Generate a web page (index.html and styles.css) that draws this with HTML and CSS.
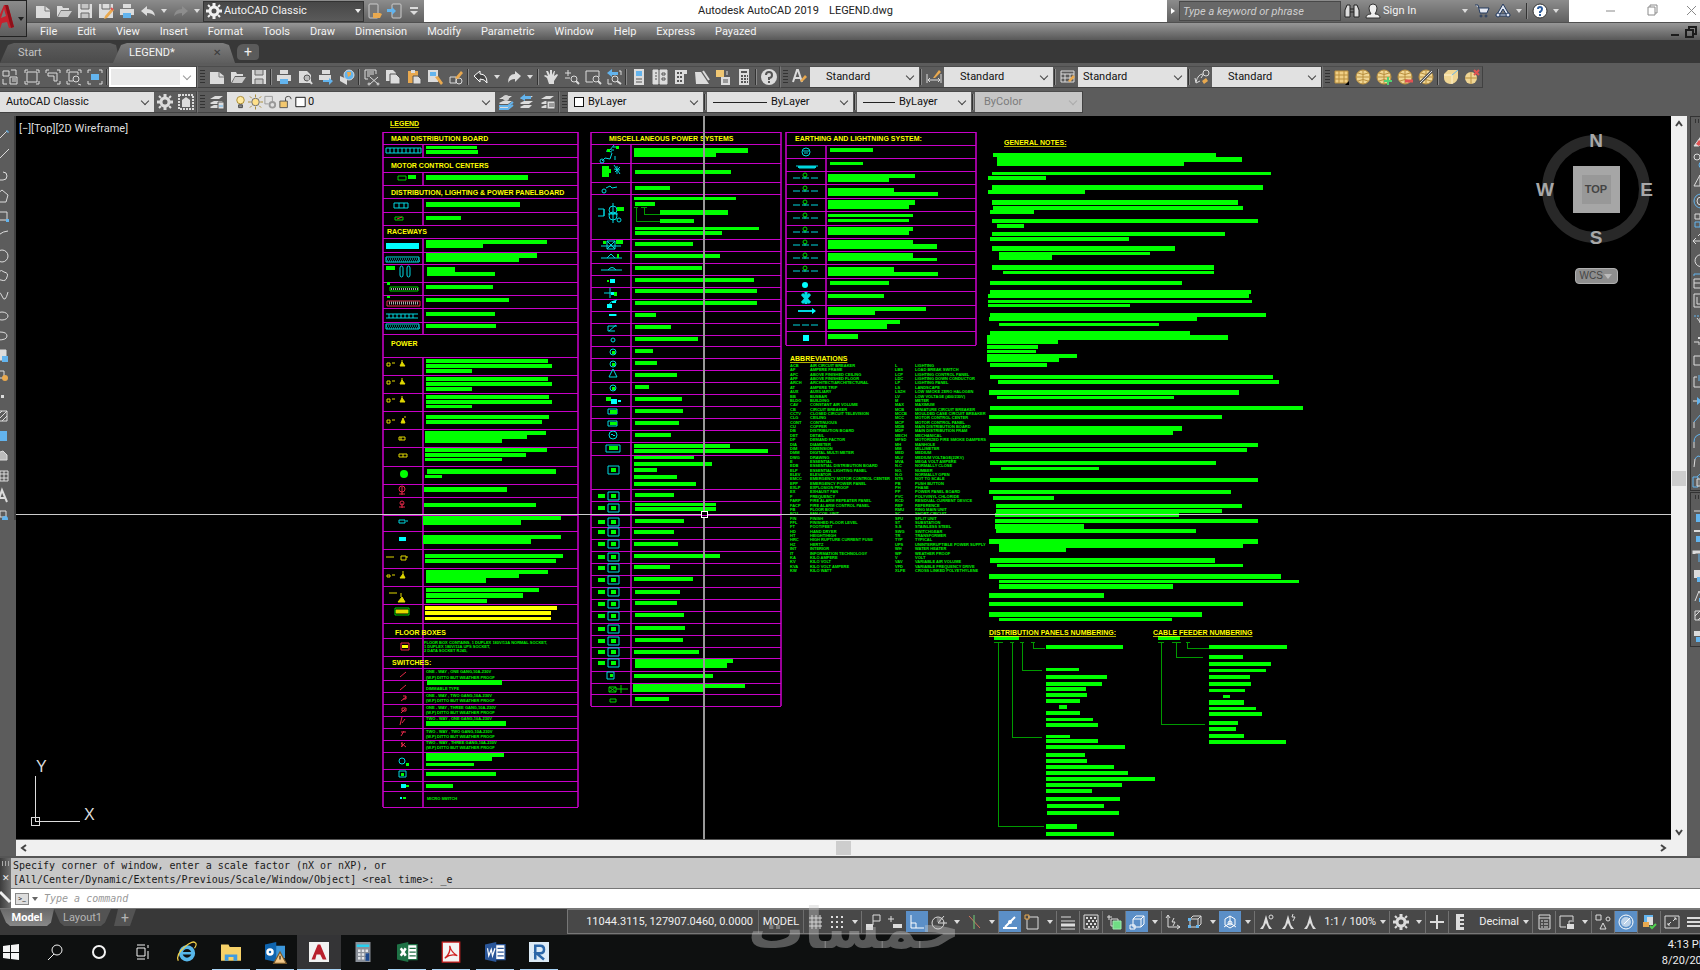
FILE: index.html
```
<!DOCTYPE html>
<html lang="en">

<head>
    <meta charset="UTF-8">
    <meta name="viewport" content="width=device-width, initial-scale=1.0">
    <title>Autodesk AutoCAD 2019 - LEGEND.dwg</title>
    <link rel="stylesheet" href="styles.css">
</head>

<body>
    <header class="top">
        <button class="app-button" aria-label="Application menu">
            <svg viewBox="0 0 26 36"><path d="M-6 27L4 4h4l6 22-5 1-2-6-5 1-2 6z" fill="#c8202c"/><path d="M1 17l5-2-2-7z" fill="#777"/><path d="M8 4l6 22-3 1L5 4z" fill="#8d1019"/><path d="M18 16h6l-3 4z" fill="#222"/></svg>
        </button>
        <div class="top-rows">
            <div class="titlebar">
                <div class="quick-access">
                    <span class="tools" data-icons="new open save saveas print undo . redo ."></span>
                    <label class="workspace"><span data-icon="gear"></span>
                        <select aria-label="Workspace"><option>AutoCAD Classic</option></select>
                    </label>
                    <span class="tools phones" data-icons="phoneopen phonesave more"></span>
                </div>
                <h1 class="title"><span>Autodesk AutoCAD 2019</span><span>LEGEND.dwg</span></h1>
                <div class="info-center">
                    <button class="arrow-box" aria-label="Collapse search"><i></i></button>
                    <input type="text" placeholder="Type a keyword or phrase" aria-label="Search">
                    <span class="tools" data-icons="binoculars user"></span>
                    <button class="sign-in">Sign In</button>
                    <span class="tools" data-icons=". cart a360 . | help2 ."></span>
                </div>
                <div class="window-buttons">
                    <button aria-label="Minimize" data-icon="min"></button>
                    <button aria-label="Restore" data-icon="restore"></button>
                    <button aria-label="Close" data-icon="close"></button>
                </div>
            </div>
            <nav class="menubar">
                <a href="#">File</a>
                <a href="#">Edit</a>
                <a href="#">View</a>
                <a href="#">Insert</a>
                <a href="#">Format</a>
                <a href="#">Tools</a>
                <a href="#">Draw</a>
                <a href="#">Dimension</a>
                <a href="#">Modify</a>
                <a href="#">Parametric</a>
                <a href="#">Window</a>
                <a href="#">Help</a>
                <a href="#">Express</a>
                <a href="#">Payazed</a>
                <span class="doc-buttons">
                    <button aria-label="Minimize drawing" data-icon="docmin"></button>
                    <button aria-label="Restore drawing" data-icon="docrestore"></button>
                </span>
            </nav>
        </div>
    </header>

    <div class="file-tabs">
        <button class="file-tab">Start</button>
        <button class="file-tab active">LEGEND*<span class="tab-close">✕</span></button>
        <button class="tab-add" aria-label="New tab">+</button>
    </div>

    <div class="toolbars">
        <div class="toolbar-row">
            <div class="toolbar first">
                <span class="tools" data-icons="vp1 vp2 vp3 vp4 vp5 |"></span>
                <label class="combo blank"><select aria-label="Viewport scale"><option></option></select></label>
            </div>
            <div class="toolbar">
                <i class="grip"></i>
                <span class="tools" data-icons="new open save | print preview publish globe | cut copy paste match blockedit | undo2 . redo2 . | hand zoomrt zoomwin zoomprev | props dcenter palettes sheets markup calc | help"></span>
            </div>
            <div class="toolbar">
                <i class="grip"></i>
                <span class="tools" data-icons="textstyle"></span>
                <label class="combo style"><select aria-label="Text style"><option>Standard</option></select></label>
                <span class="tools" data-icons="| dimstyle"></span>
                <label class="combo style"><select aria-label="Dimension style"><option>Standard</option></select></label>
                <span class="tools" data-icons="| tablestyle"></span>
                <label class="combo style tight"><select aria-label="Table style"><option>Standard</option></select></label>
                <span class="tools" data-icons="| leaderstyle"></span>
                <label class="combo style"><select aria-label="Leader style"><option>Standard</option></select></label>
            </div>
            <div class="toolbar">
                <i class="grip"></i>
                <span class="tools" data-icons="mesh1 mesh2 mesh3 mesh4 mesh5 | mesh6 mesh7"></span>
            </div>
        </div>
        <div class="toolbar-row">
            <div class="toolbar first">
                <label class="combo space"><select aria-label="Workspaces"><option>AutoCAD Classic</option></select></label>
                <span class="tools" data-icons="gear lattice"></span>
            </div>
            <div class="toolbar">
                <i class="grip"></i>
                <span class="tools" data-icons="layers"></span>
                <label class="combo layer"><span class="layer-state" data-icons="bulb sun freeze lock swatch"></span><select aria-label="Layer"><option>0</option></select></label>
                <span class="tools" data-icons="laycur layprev laystate"></span>
            </div>
            <div class="toolbar">
                <i class="grip"></i>
                <label class="combo color"><i class="swatch"></i><select aria-label="Color"><option>ByLayer</option></select></label>
                <span class="tools" data-icons="|"></span>
                <label class="combo linetype"><i class="line long"></i><select aria-label="Linetype"><option>ByLayer</option></select></label>
                <span class="tools" data-icons="|"></span>
                <label class="combo weight"><i class="line"></i><select aria-label="Lineweight"><option>ByLayer</option></select></label>
                <span class="tools" data-icons="|"></span>
                <label class="combo plot"><select aria-label="Plot style" disabled><option>ByColor</option></select></label>
            </div>
        </div>
    </div>

    <main class="workspace-area">
        <div class="side-tools left" data-icons="line xline pline polygon rect arc circle cloud spline ellipse elarc insert block point hatch gradient region table mtext addsel"></div>
        <section class="viewport">
            <div class="canvas">
                <svg class="drawing" role="img" aria-label="Electrical legend drawing">
                    <g id="sheet" transform="translate(-16 -116)">
                        <g id="grid"></g>
                        <g id="bars"></g>
                        <g id="captions"></g>
                        <g id="abbreviations" class="small"></g>

                        <!-- leaders of the numbering diagrams -->
                        <path class="leader" d="M994 642h9M998 642v184h46M1010 642h4M1012 642v95h30M1020 642h4M1022 642v28h20M1031 642h4M1033 642v6h12M1158 642h6M1161 642v82h44M1172 642h9M1176 642v15h27M1186 642h4M1187 642v6h22"/>
                        <path class="leader" d="M634 207h4M636 207v14h24M641 207h6M644 207v7h16"/>

                        <!-- main distribution board, raceways -->
                        <g class="cyan">
                            <path d="M386 148h35v5h-35zM390 148v5M394 148v5M398 148v5M402 148v5M406 148v5M410 148v5M414 148v5M418 148v5M394 203h14v5h-14zM399 203v5M404 203v5"/>
                            <path class="solid" d="M386 243h33v6h-33z"/>
                            <path d="M386 257h33v5h-33zM386 324h33v5h-33z"/>
                            <path class="dots" d="M386 259h33M387 261h33M386 326h33M387 328h33"/>
                            <rect x="400" y="266" width="3" height="11" rx="2"/><rect x="407" y="266" width="3" height="11" rx="2"/>
                            <path d="M386 314h32M386 318h32M389 314v4M393 314v4M397 314v4M401 314v4M405 314v4M409 314v4M413 314v4"/>
                        </g>
                        <path class="green" d="M390 287h28v4h-28z"/>
                        <path class="grey dots" d="M391 289h27" stroke-width="2"/>
                        <path class="green" d="M398 176h8v4h-8zM395 217h8v3h-8z"/>
                        <path class="green solid" d="M408 175h8v4h-8zM386 266h9v4h-9zM387 282h3v3h-3zM387 296h3v2h-3z"/>
                        <path class="red" d="M387 301h33v5h-33zM397 219l5-2"/><path class="grey dots" d="M389 303h29" stroke-width="3"/>

                        <!-- power outlets -->
                        <g class="yellow">
                            <path d="M387 363h3v3h-3zM392 363h3M402 360v3M387 381h3v3h-3zM392 381h3M402 378v3M387 399h3v3h-3zM392 399h3M402 396v3M387 420h3v3h-3zM392 420h3M405 416v2M399 437h6v3h-6zM401 437v3M399 454h8v3h-8zM403 454v3M386 557h8M401 556h5v4h-5zM406 557h2M387 575h3v2h-3zM392 575h3M403 571v3M389 593h8M401 593v4"/>
                            <path class="fill" d="M400 366l2-4 3 4zM400 384l2-4 3 4zM400 402l2-4 3 4zM401 423l2-5 2 5zM400 578l3-4 2 4zM398 602l4-5 3 5zM396 610h12v3h-12z"/>
                        </g>
                        <circle class="green solid" cx="404" cy="474" r="4"/>
                        <path class="green" d="M395 608h14v7h-14z"/>
                        <g class="red"><circle cx="402" cy="489" r="3"/><path d="M402 487v8M399 494h6"/><circle cx="402" cy="503" r="2"/><path d="M402 503v5M399 507h6M401 643h8v7h-8zM400 677l6-5M400 690l6-5M401 701l5-4M403 696h3v3h-3M401 713l4-4M402 708h4v3h-4zM400 725l2-8M402 723l3-4M401 736l3-5M401 732h5M401 747l4-4M401 743l5 4M402 742v5"/></g>
                        <path class="yellow solid" d="M402 645h6v3h-6z"/>
                        <g class="cyan"><path d="M399 520h6v3h-6zM406 521h2"/><path class="solid" d="M399 537h7v4h-7z"/><circle cx="402" cy="761" r="3"/><path d="M399 771h7v6h-7z"/><path class="solid" d="M401 784h5v4h-5zM400 797h2v2h-2z"/></g>
                        <path class="green solid" d="M406 763h3v3h-3zM401 773h3v3h-3zM406 785h3v2h-3zM403 797h3v2h-3z"/>

                        <!-- miscellaneous power systems -->
                        <g class="cyan">
                            <path d="M602 161l3-3 5 1M606 151l6 1M614 145l-4 5M613 147l4 0M612 153l-2 6M615 156v4M611 150h3M614 165l6 9M615 172l5-5M614 169l6 1M617 166v8"/>
                            <circle cx="602" cy="161" r="2"/><circle cx="613" cy="210" r="4"/><circle cx="613" cy="216" r="4"/><circle cx="604" cy="191" r="2"/><circle cx="619" cy="220" r="2"/>
                            <path d="M606 188l4-2 2 2 5-1M613 203v20M598 209h6v7M598 216h6M604 209v7M608 214h10M601 246h20M607 241h8v8h-8zM607 241l8 8M615 241l-8 8M601 258h21M607 258l4-4 4 4M601 270h21M608 270q4-5 8 0M604 293h9M610 288v10M608 306l3-4 6-2M609 315h8M608 326h9M609 331l7-6M608 326v5h7M609 377l4-8 4 8z"/>
                            <path class="solid" d="M610 279h5v4h-5zM611 292h4v3h-4zM607 304h5v4h-5zM612 301h4v2h-4zM609 314h7v2h-7zM611 399h6v5h-6zM618 400h3v2h-3z"/>
                            <circle cx="613" cy="340" r="2"/><circle cx="613" cy="352" r="3"/><circle cx="613" cy="364" r="3"/><circle cx="613" cy="388" r="3"/><circle cx="613" cy="435" r="4"/>
                            <path d="M611 435q1-2 2 0t2 0M608 409h9v5h-9zM608 421h9v5h-9zM606 445h14v7h-14zM607 672h7v7h-7z"/>
                        </g>
                        <path class="green solid" d="M616 146h3v3h-3zM607 149h3v3h-3zM602 166h7v11h-7zM609 169h2v4h-2zM617 207h7v4h-7zM603 241h3v3h-3zM616 240h7v4h-7zM617 254h2v4h-2zM607 280h2v2h-2zM614 292h3v4h-3zM612 351h3v3h-3zM612 363h3v3h-3zM612 387h3v3h-3zM606 397h5v4h-5zM610 410h7v4h-7zM610 422h7v3h-7zM609 446h9v4h-9zM610 674h3v3h-3z"/>
                        <path class="green" d="M609 687h7v5h-7zM609 687l7 5M616 687l-7 5M616 689h12M621 685v8M610 699h6v3h-6z"/>

                        <!-- earthing and lightning -->
                        <g class="cyan">
                            <circle cx="806" cy="152" r="4"/><path d="M803 151h6M804 153h4M796 166h22M799 168h16"/>
                            <path d="M798 167h18" stroke-width="2"/>
                            <path class="dashes" d="M793 178h27M793 191h27M793 205h27M793 218h27M793 232h27M793 245h27M793 258h27M793 271h27M793 325h27"/>
                            <circle class="solid" cx="805" cy="285" r="3"/>
                            <path d="M802 294l8 9M810 294l-8 9M806 292v12" stroke-width="3"/>
                            <path d="M798 311h16" stroke-width="2"/><path class="solid" d="M812 308l4 3-4 3zM803 335h6v6h-6z"/>
                        </g>

                        <!-- axis marker -->
                        <path class="axis" d="M35 776v45h45M31 817h8v8h-8z"/>
                        <text class="axis-name" x="36" y="772">Y</text>
                        <text class="axis-name" x="84" y="820">X</text>

                        <!-- cursor -->
                        <path class="cursor" d="M704 116v395M704 518v321"/>
                        <path class="cursor level" d="M16 514h685M708 514h964"/>
                        <path class="cursor-box" d="M701 511h6v6h-6z"/>
                    </g>
                </svg>
                <div class="view-label">[−][Top][2D Wireframe]</div>
                <div class="view-cube">
                    <div class="ring">
                        <b class="n">N</b><b class="w">W</b><b class="e">E</b><b class="s">S</b>
                        <button class="cube">TOP</button>
                    </div>
                    <button class="wcs">WCS <i></i></button>
                </div>
            </div>
            <div class="scroll-v"><span data-icon="up"></span><i></i><span data-icon="down"></span></div>
            <div class="scroll-h"><span data-icon="lt"></span><i></i><span data-icon="gt"></span></div>
        </section>
        <div class="side-stack">
            <div class="side-tools right" data-icons="erase copyobj mirror offset array move rotate scale stretch trim extend breakpt breakat join chamfer fillet blend explode"></div>
            <div class="side-tools right" data-icons="front back above below annofront hatchback draworder"></div>
        </div>
    </main>

    <section class="command">
        <div class="command-side"><i class="grip-dots"></i><span>✕</span><span data-icon="wrench"></span></div>
        <div class="command-body">
            <pre class="history">Specify corner of window, enter a scale factor (nX or nXP), or
[All/Center/Dynamic/Extents/Previous/Scale/Window/Object] &lt;real time&gt;: _e</pre>
            <label class="prompt"><span class="prompt-icon">&gt;_</span><i class="caret"></i>
                <input type="text" placeholder="Type a command" aria-label="Command"></label>
        </div>
    </section>

    <footer class="status">
        <div class="layout-tabs">
            <button class="layout-tab active">Model</button>
            <button class="layout-tab">Layout1</button>
            <button class="layout-tab add" aria-label="New layout">+</button>
        </div>
        <div class="status-tools">
            <span class="coords">11044.3115, 127907.0460, 0.0000</span>
            <button class="model">MODEL</button>
            <span class="tools" data-icons="grid snap . | infer dynin ortho* polar . iso . | otrack* osnap . | lwt | transp | cycle | osnap3d* . | ducs filter . gizmo* . | annovis annoauto anno"></span>
            <button class="scale">1:1 / 100%</button>
            <span class="tools" data-icons=". | gear . | plus | ruler"></span>
            <button class="units">Decimal</button>
            <span class="tools" data-icons=". | quickprop | lockui . | isolate | hardware* | trusted | clean custom"></span>
        </div>
    </footer>

    <footer class="taskbar">
        <div class="apps" data-icons="win search cortana taskview ie folder+ outlook+ acad* calcapp excel+ pdf+ word+ revit+"></div>
        <div class="clock"><span>4:13 PM</span><span>8/20/2019</span></div>
    </footer>
    <div class="watermark" lang="ar">خمسات</div>

    <script src="icons.js"></script>
    <script src="drawing.js"></script>
</body>

</html>
```

FILE: styles.css
```
:root {
    --panel: #5c5c5c;
    --panel-dark: #383838;
    --edge: #414141;
    --combo: #e1e1e1;
    --active: #5b8fc7;
    --icon: #dcdcdc;
    --lime: #00ff00;
    --magenta: #c800c8;
}

* {
    margin: 0;
    padding: 0;
    box-sizing: border-box;
}

body {
    font-family: Roboto, 'Open Sans', sans-serif;
    font-size: 11px;
    line-height: 14px;
    color: #eee;
    background-color: var(--panel);
    display: flex;
    flex-direction: column;
    height: 100vh;
    overflow: hidden;
}

button, input, select {
    font: inherit;
    color: inherit;
    background: none;
    border: none;
    border-radius: 0;
    appearance: none;
    outline: none;
}

a {
    color: inherit;
    text-decoration: none;
}

.icon {
    display: block;
    flex: none;
    width: 16px;
    height: 16px;
    fill: none;
    stroke: currentColor;
    overflow: visible;
}

.icon .f { fill: currentColor; stroke: none; }
.icon .b { stroke: #63b4ee; }
.icon .bf { fill: #63b4ee; stroke: none; }
.icon .o { fill: #e9a94f; stroke: none; }

/* top */
.top {
    display: flex;
    height: 40px;
}

.app-button {
    width: 27px;
    height: 37px;
    background: linear-gradient(#8b8b8b, #5d5d5d);
    border: 1px solid #222;
    border-left: none;
    flex: none;
    overflow: hidden;
}

.app-button svg {
    display: block;
    width: 26px;
    height: 36px;
}

.top-rows {
    flex: 1;
    min-width: 0;
}

.titlebar {
    display: flex;
    height: 22px;
    background: #fff;
}

.quick-access, .info-center {
    display: flex;
    align-items: center;
    background: linear-gradient(#8c8c8c, #606060);
    color: #f2f2f2;
}

.quick-access {
    width: 397px;
    padding-left: 5px;
}

.quick-access .phones button {
    width: 20px;
}

.workspace {
    display: flex;
    align-items: center;
    gap: 2px;
    flex: 1;
    height: 21px;
    padding-left: 2px;
    background: linear-gradient(#474747, #5a5a5a);
    border: 1px solid #333;
}

.workspace select {
    flex: 1;
    min-width: 0;
}

.workspace::after {
    content: "";
    border: 3px solid transparent;
    border-top: 4px solid #eee;
    border-bottom: none;
    margin-right: 2px;
}

.title {
    flex: 1;
    display: flex;
    gap: 10px;
    align-items: center;
    justify-content: center;
    font-size: 11px;
    font-weight: normal;
    color: #222;
}

.info-center {
    width: 402px;
    padding-right: 1px;
}

.info-center input {
    width: 162px;
    height: 20px;
    padding-left: 3px;
    background: #676767;
    border: 1px solid #484848;
    font-style: italic;
}

.info-center input::placeholder {
    color: #cfcfcf;
    opacity: 1;
}

.info-center .sign-in {
    width: 76px;
    text-align: left;
}

.arrow-box {
    width: 12px;
    display: flex;
    justify-content: center;
}

.arrow-box i {
    border: 3px solid transparent;
    border-left: 4px solid #fff;
    border-right: none;
}

.window-buttons {
    display: flex;
    justify-content: space-between;
    align-items: center;
    width: 131px;
    padding: 0 0 2px 34px;
    color: #8a8a8a;
}

.menubar {
    display: flex;
    align-items: center;
    gap: 20px;
    height: 18px;
    padding-left: 13px;
    background: linear-gradient(#979797, #585858);
    border-top: 1px solid #505050;
    color: #f3f3f3;
}

.doc-buttons {
    display: flex;
    margin-left: auto;
    color: #1c1c1c;
}

/* file tabs */
.file-tabs {
    display: flex;
    align-items: flex-end;
    height: 23px;
    background: var(--panel-dark);
}

.file-tab {
    width: 120px;
    height: 20px;
    padding-left: 18px;
    text-align: left;
    color: #c4c4c4;
    background: linear-gradient(#5c5c5c, #4b4b4b);
    clip-path: polygon(0 100%, 8px 10%, 14px 0, 110px 0, 116px 10%, 100% 100%);
}

.file-tab.active {
    width: 122px;
    margin-left: -7px;
    padding-left: 16px;
    color: #f4f4f4;
    background: linear-gradient(#7d7d7d, #5e5e5e);
}

.tab-close {
    float: right;
    margin-right: 14px;
    color: #3a3a3a;
    font-size: 10px;
}

.tab-add {
    width: 22px;
    height: 16px;
    margin: 0 0 3px 2px;
    background: #5b5b5b;
    border-radius: 6px 4px 4px 4px;
    color: #eee;
    font-size: 14px;
}

/* toolbars */
.toolbars {
    display: flex;
    flex-direction: column;
    gap: 3px;
    height: 53px;
    padding-top: 3px;
}

.toolbar-row {
    display: flex;
}

.toolbar {
    display: flex;
    align-items: center;
    height: 22px;
    padding-left: 2px;
    border: 1px solid var(--edge);
    border-left-color: #777;
    border-top-color: #4c4c4c;
    flex: none;
}

.toolbar.first {
    padding-left: 0;
    border-left: none;
    width: 197px;
}

.grip {
    width: 6px;
    height: 15px;
    background: repeating-linear-gradient(#333 0 1px, transparent 1px 3px);
    border-right: 1px solid var(--panel);
}

.tools {
    display: flex;
    align-items: center;
    flex: none;
}

.tools button {
    display: flex;
    align-items: center;
    justify-content: center;
    width: 21px;
    height: 20px;
    color: var(--icon);
}

.tools .drop {
    width: 12px;
}

.drop::before {
    content: "";
    border: 3px solid transparent;
    border-top: 4px solid currentColor;
    border-bottom: none;
}

.tools .sep {
    width: 2px;
    height: 16px;
    margin: 0 1px;
    border-left: 1px solid #333;
    border-right: 1px solid #8a8a8a;
}

.combo {
    position: relative;
    display: flex;
    align-items: center;
    height: 20px;
    background: var(--combo);
    color: #111;
    padding-left: 6px;
}

.combo select {
    flex: 1;
    min-width: 0;
    height: 18px;
}

.combo::after {
    content: "";
    position: absolute;
    right: 6px;
    top: 6px;
    width: 5px;
    height: 5px;
    border: solid #444;
    border-width: 0 1px 1px 0;
    transform: rotate(45deg);
}

.blank { width: 88px; background: #e9e9e9; border: 2px solid #fff; border-right-width: 16px; }
.blank::after { right: -10px; top: 4px; border-color: #999; }
.style { width: 109px; padding-left: 16px; }
.tight { padding-left: 5px; }
.space { width: 155px; }
.layer { width: 268px; }
.color { width: 135px; gap: 4px; }
.linetype { width: 146px; gap: 4px; }
.weight { width: 114px; gap: 4px; }
.plot { width: 107px; padding-left: 9px; background: #c6c6c6; }
.plot::after { border-color: #aaa; }
.plot select { color: #7b7b7b; opacity: 1; }

.layer-state {
    display: flex;
    color: #444;
}

.layer-state .icon {
    width: 15px;
}

.swatch {
    width: 10px;
    height: 10px;
    background: #fff;
    border: 1px solid #111;
}

.line {
    width: 32px;
    height: 1px;
    background: #222;
}

.line.long {
    width: 54px;
}

/* work area */
.workspace-area {
    flex: 1;
    display: flex;
    min-height: 0;
    overflow: hidden;
}

.side-tools {
    display: flex;
    flex-direction: column;
    gap: 4px;
    color: var(--icon);
    overflow: hidden;
}

.side-tools::before {
    content: "";
    height: 4px;
    margin: 2px 2px 6px;
    background: repeating-linear-gradient(90deg, #333 0 1px, transparent 1px 3px);
}

.side-tools button {
    width: 16px;
    height: 16px;
    flex: none;
}

.side-tools.left {
    width: 16px;
    border-right: 2px solid var(--edge);
    height: 404px;
}

.side-tools.left button {
    margin-left: -6px;
}

.side-stack {
    width: 13px;
    padding-left: 3px;
    overflow: hidden;
}

.side-tools.right {
    width: 24px;
    padding: 0 0 1px 2px;
    border: 1px solid #333;
    margin-bottom: 1px;
}

.viewport {
    flex: 1;
    display: grid;
    grid-template-columns: 1fr 16px;
    grid-template-rows: 1fr 16px;
    min-width: 0;
    background: #f0f0f0;
}

.canvas {
    position: relative;
    background: #000;
    overflow: hidden;
    border-bottom: 1px solid #555;
}

.scroll-v, .scroll-h {
    display: flex;
    align-items: center;
    justify-content: space-between;
    color: #444;
}

.scroll-v { flex-direction: column; }
.scroll-v i { width: 14px; height: 15px; background: #cdcdcd; }
.scroll-h i { width: 15px; height: 14px; background: #cdcdcd; }

.view-label {
    position: absolute;
    left: 3px;
    top: 6px;
    color: #ddd;
}

.view-cube {
    position: absolute;
    right: 15px;
    top: 19px;
    width: 120px;
    display: flex;
    flex-direction: column;
    align-items: center;
    font-family: 'Liberation Sans', sans-serif;
}

.ring {
    display: flex;
    align-items: center;
    justify-content: center;
    position: relative;
    width: 108px;
    height: 108px;
    border: 11px solid #282828;
    border-radius: 50%;
}

.ring b {
    position: absolute;
    font-size: 19px;
    line-height: 19px;
    color: #a8a8a8;
}

.n { top: -15px; }
.s { bottom: -15px; }
.w { left: -17px; }
.e { right: -14px; }

.cube {
    width: 47px;
    height: 47px;
    background: #989898;
    border: 9px solid #a6a6a6;
    color: #444;
    font-size: 11px;
    font-weight: bold;
    display: flex;
    align-items: center;
    justify-content: center;
}

.wcs {
    display: flex;
    align-items: center;
    justify-content: space-between;
    width: 43px;
    height: 16px;
    margin-top: 25px;
    padding: 0 5px 0 4px;
    background: #8e8e8e;
    border: 1px solid #b0b0b0;
    border-radius: 4px;
    color: #444;
    font-size: 10px;
}

.wcs i {
    border: 4px solid transparent;
    border-top: 5px solid #bbb;
    border-bottom: none;
}

/* drawing */
.drawing {
    display: block;
    width: 100%;
    height: 100%;
    font-family: 'Liberation Sans', sans-serif;
    fill: none;
    stroke-width: 1px;
}

.grid-line { stroke: var(--magenta); shape-rendering: crispEdges; }
.grid-side { stroke: #9a009a; stroke-width: 2px; shape-rendering: crispEdges; }
.bar { fill: var(--lime); }
.bar.gold { fill: #ffff00; }
.heading { fill: #ffff00; font-size: 7px; font-weight: bold; }
.heading.under { text-decoration: underline; }
.small { fill: #00f000; font-size: 4px; font-weight: bold; }
.leader { stroke: #009a00; shape-rendering: crispEdges; }
.cyan { stroke: #00d8e0; }
.cyan .solid { fill: #00ffff; stroke: none; }
.green { stroke: #00d000; }
.green.solid { fill: var(--lime); stroke: none; }
.yellow { stroke: #e0d800; }
.yellow .fill { fill: #e0d800; }
.yellow.solid { fill: #ffff00; stroke: none; }
.red { stroke: #e8284a; }
.grey { stroke: #aaa; }
.dots { stroke-dasharray: 1 1; }
.dashes { stroke-dasharray: 7 2; }
.axis { stroke: #ddd; shape-rendering: crispEdges; }
.axis-name { fill: #ddd; font-size: 16px; }
.cursor { stroke: #999; stroke-width: 2px; shape-rendering: crispEdges; }
.cursor.level { stroke: #ccc; stroke-width: 1px; }
.cursor-box { stroke: #fff; shape-rendering: crispEdges; }

/* command line */
.command {
    display: flex;
    height: 52px;
    border-top: 2px solid #555;
    background: #fff;
}

.command-side {
    width: 11px;
    background: linear-gradient(90deg, #3c3c3c, #6f6f6f);
    display: flex;
    flex-direction: column;
    align-items: center;
    justify-content: space-between;
    padding: 3px 0;
    font-size: 9px;
}

.grip-dots {
    width: 8px;
    height: 5px;
    background: repeating-linear-gradient(90deg, #aaa 0 1px, transparent 1px 3px);
}

.command-body {
    flex: 1;
}

.history {
    height: 31px;
    padding: 1px 2px 0;
    font-family: 'DejaVu Sans Mono', monospace;
    font-size: 10px;
    line-height: 14px;
    color: #1a1a1a;
    background: #c8c8c8;
    border-bottom: 1px solid #777;
}

.prompt {
    display: flex;
    align-items: center;
    height: 19px;
    padding-left: 4px;
}

.prompt-icon {
    width: 14px;
    height: 12px;
    border: 1px solid #888;
    background: #ddd;
    color: #333;
    font-size: 8px;
    line-height: 10px;
    text-align: center;
}

.caret {
    margin: 0 6px 0 3px;
    border: 3px solid transparent;
    border-top: 4px solid #666;
    border-bottom: none;
}

.prompt input {
    flex: 1;
    font-family: 'DejaVu Sans Mono', monospace;
    font-size: 10px;
    font-style: italic;
}

.prompt input::placeholder {
    color: #999;
    opacity: 1;
}

/* status bar */
.status {
    display: flex;
    justify-content: space-between;
    height: 27px;
    background: var(--panel-dark);
    border-top: 1px solid #777;
    overflow: hidden;
}

.layout-tabs {
    display: flex;
}

.layout-tab {
    height: 17px;
    width: 57px;
    color: #b5b5b5;
    background: #535353;
    clip-path: polygon(0 0, 100% 0, 51px 80%, 47px 100%, 10px 100%, 6px 80%);
}

.layout-tab.active {
    width: 54px;
    background: linear-gradient(#6a6a6a, #888);
    color: #fff;
    font-weight: bold;
}

.layout-tab.add {
    width: 22px;
    margin-left: 3px;
    clip-path: polygon(4px 0, 100% 0, 16px 100%, 0 100%);
    font-size: 14px;
}

.status-tools {
    display: flex;
    align-items: center;
    height: 25px;
    flex: none;
    margin-right: -6px;
    background: #484848;
    border: 1px solid #777;
    color: #f0f0f0;
}

.coords, .model, .scale, .units {
    text-align: right;
    white-space: nowrap;
}

.coords {
    width: 191px;
    padding-right: 5px;
    border-right: 1px solid #6c6c6c;
    line-height: 23px;
}

.model {
    width: 45px;
    height: 23px;
    text-align: center;
    border-right: 1px solid #6c6c6c;
}

.scale { width: 55px; }
.units { width: 48px; }

.status-tools .tools button {
    width: 22px;
    height: 21px;
}

.status-tools .tools .drop {
    width: 13px;
}

.status-tools .tools .sep {
    height: 22px;
    width: 1px;
    margin: 0;
    border-left-color: #717171;
    border-right: none;
}

.tools button.on {
    background: var(--active);
    color: #fff;
}

/* taskbar */
.taskbar {
    display: flex;
    justify-content: space-between;
    height: 35px;
    background: #0e1010;
    overflow: hidden;
}

.apps {
    display: flex;
    margin-left: -11px;
}

.apps button {
    display: flex;
    align-items: center;
    justify-content: center;
    width: 44px;
    border-bottom: 1px solid transparent;
    color: #f4f4f4;
}

.apps .icon {
    width: 20px;
    height: 20px;
}

.apps button:nth-child(-n+4) .icon {
    width: 16px;
    height: 16px;
}

.apps .run {
    border-image: linear-gradient(90deg, transparent 4px, #a8d4f5 4px 40px, transparent 40px) 1;
}

.apps .on {
    background: #343436;
    border-bottom-color: #a8d4f5;
}

.clock {
    display: flex;
    flex-direction: column;
    align-items: center;
    justify-content: center;
    gap: 2px;
    width: 54px;
    margin-right: -15px;
    flex: none;
}

.watermark {
    position: absolute;
    left: 748px;
    bottom: 8px;
    font-family: 'DejaVu Sans', sans-serif;
    font-weight: bold;
    font-size: 56px;
    line-height: 66px;
    color: rgba(200, 200, 200, 0.4);
    pointer-events: none;
}
```

FILE: icons.js
```
// 16x16 icons, class f = filled, b = blue stroke, bf = blue fill, o = orange fill
const ball = '<circle cx="8" cy="8" r="7" fill="#f0d694" stroke="#b98f3e"/><path d="M1 8h14M8 1v14M3 4q5 3 10 0M3 12q5-3 10 0" stroke="#b98f3e"/>';
const pencil = '<path d="M8 12l5-6 2 2-5 5z" class="o"/>';
const stack = '<path class="f" d="M1 5l5-3h8l-4 3zM1 9l4-2h9l-4 3H2zM1 13l4-2h8l-3 3H2z"/>';
const page = '<path class="f" d="M2 2h8l4 4v8H2z"/>';
const persona = '<path class="f" d="M8 1l3 10 3 4h-3L8 9l-3 6H2L5 11z"/>';

const icons = {
    new: '<path class="f" d="M1 3h9l5 4v8H1z"/><path d="M10 3v5h5" stroke="#777"/>',
    open: '<path class="f" d="M1 14V3h5l1 2h6v2H5z"/><path class="f" d="M5 8h11l-4 6H2z" opacity=".85"/>',
    save: '<path class="f" d="M1 1h14v14H1z"/><path d="M4 1v5h8V1M4 15v-5h8v5" stroke="#666" fill="#c4c4c4"/>',
    saveas: '<path class="f" d="M1 1h14v14H1z"/><path d="M4 1v5h8V1" stroke="#666"/><path class="o" d="M7 13l7-8 2 2-7 8-3 1z"/><path d="M13 5l2 2" stroke="#e05252" stroke-width="2"/>',
    print: '<path class="f" d="M4 1h8v4H4zM1 6h14v6H1z"/><path class="bf" d="M4 10h8v5H4z"/>',
    undo: '<path class="f" d="M1 8l6-5v3q7 0 8 7-3-3-8-3v3z"/>',
    redo: '<path d="M15 8L9 3v3Q2 6 1 13q3-3 8-3v3z" fill="#8d8d8d" stroke="none"/>',
    undo2: '<path d="M1 7l6-5v3q7 0 7 9-2-4-7-4v3z" fill="#444" stroke="#fff"/>',
    redo2: '<path class="f" d="M15 7L9 2v3Q2 5 2 14q2-4 7-4v3z"/>',
    gear: '<circle cx="8" cy="8" r="4" stroke-width="3"/><path stroke-width="3" d="M8 0v3M8 13v3M0 8h3M13 8h3" /><path stroke-width="2" d="M2 2l2 2M12 12l2 2M14 2l-2 2M2 14l2-2"/>',
    phoneopen: '<rect x="3" y="1" width="9" height="14" rx="1" stroke="#ccc" fill="#777"/><path class="o" d="M7 10h7l2 1-2 4H7z"/>',
    phonesave: '<rect x="6" y="1" width="9" height="14" rx="1" stroke="#ccc" fill="#777"/><path class="bf" d="M1 6h5V4l4 4-4 4V9H1z"/>',
    more: '<path d="M4 5h8" stroke-width="2"/><path class="f" d="M4 8h8l-4 4z"/>',
    binoculars: '<path d="M1 14V7l2-5h3v12zM15 14V7l-2-5h-3v12zM6 6h4M6 9h4" stroke="#222" fill="#ddd"/>',
    user: '<path d="M1 15q0-4 5-4Q4 8 4 5q0-4 4-4t4 4q0 3-2 6 5 0 5 4z" fill="#eee" stroke="#333"/>',
    cart: '<path d="M1 2h3l2 8h7l2-5H5" stroke="#23395d" fill="#e6eaf2"/><circle cx="7" cy="13" r="1" stroke="#23395d"/><circle cx="12" cy="13" r="1" stroke="#23395d"/>',
    a360: '<path d="M8 1l7 12H1z" fill="#dfe6f2" stroke="#23395d"/><path d="M8 6l3 5H5z" fill="#777" stroke="#23395d"/><circle cx="3" cy="12" r="2" fill="#dfe6f2" stroke="#23395d"/><circle cx="13" cy="12" r="2" fill="#dfe6f2" stroke="#23395d"/>',
    help: '<circle class="f" cx="8" cy="8" r="8"/><path d="M5 6q0-3 3-3t3 3-3 3v2M8 12v2" stroke="#555" stroke-width="2"/>',
    help2: '<circle cx="8" cy="8" r="7" fill="#fff" stroke="#333"/><path d="M6 6q0-2 2-2t2 2-2 3v1M8 11v2" stroke="#2f5e9e" stroke-width="2"/>',
    min: '<path d="M3 9h9"/>',
    restore: '<path d="M4 5h7v8H4zM6 5V3h7v8h-2"/>',
    close: '<path d="M3 4l9 9M12 4l-9 9"/>',
    docmin: '<path d="M3 11h8" stroke-width="2"/>',
    docrestore: '<path d="M2 6h7v7H2zM5 6V3h7v7H9" stroke-width="2"/>',
    vp1: '<path d="M0 2h6v5H0zM8 1h5M13 1v5M0 10v5h4M7 8h7v7H7zM9 10h4M9 12h4"/>',
    vp2: '<path d="M3 3h10v10H3zM1 4V1h3M12 1h3v3M15 12v3h-3M4 15H1v-3"/>',
    vp3: '<path d="M1 4V1h3M12 1h3v3M15 12v3h-3M3 4h9v8h-3V7H3z"/>',
    vp4: '<path d="M3 3h9v3M3 3v9h4M1 4V1h3M12 1h3v3M4 15H1v-3M12 15l3 1"/><circle cx="10" cy="10" r="3"/>',
    vp5: '<path d="M1 4V1h3M12 1h3v3M15 12v3h-3M4 15H1v-3"/><path class="bf" d="M4 5h8v6H4z"/>',
    preview: page + '<circle cx="10" cy="9" r="3" stroke="#555" fill="#bbb"/><path d="M12 11l3 4" stroke-width="2"/>',
    publish: '<path class="f" d="M4 1h8v4H4zM1 6h12v5H1z"/><path class="bf" d="M5 11h6V9l4 3-4 4v-3H5z"/>',
    globe: '<path class="f" d="M1 7l7 3v6L1 12z"/><circle cx="10" cy="6" r="5" fill="#63b4ee" stroke="#ddd"/><path class="o" d="M8 3h4v3l-3 2z"/>',
    cut: '<path d="M1 1h11v4M1 1v9h3M3 3h7M3 5h7M3 7h3M6 8l8 7M14 8L6 15"/><circle cx="5" cy="15" r="1"/><circle cx="14" cy="15" r="1"/>',
    copy: '<path class="f" d="M1 1h7l3 3v8H1z"/><path d="M5 5h6l4 4v6H5z" fill="#ddd" stroke="#555"/>',
    paste: '<path class="o" d="M2 2h10v12H2z"/><path class="f" d="M5 1h4v3H5z"/><path d="M7 7h5l3 3v5H7z" fill="#ddd" stroke="#555"/>',
    match: '<path class="f" d="M1 1h10v12H1z"/><path class="bf" d="M3 3h6v4H3z"/><path class="o" d="M8 8l3-1 5 7-2 2z"/>',
    blockedit: '<path d="M2 8h6v6H2z"/><circle cx="11" cy="12" r="3"/><path d="M7 9l6-7 2 2-5 6z" class="o"/>',
    hand: '<path class="f" d="M4 9L1 7l1-1 3 1L3 2h2l2 4V1h2v5l2-4h1l-1 5 3-2 1 1-4 6v3H6z"/>',
    zoomrt: '<path d="M1 4h6M4 1v6M1 9h5"/><circle cx="10" cy="10" r="3"/><path d="M12 12l3 3" stroke-width="2"/>',
    zoomwin: '<path d="M1 2h13v6M1 2v11h7"/><circle cx="11" cy="10" r="3"/><path d="M13 12l3 3" stroke-width="2"/>',
    zoomprev: '<path class="bf" d="M1 4l5-4v3h6v3H6v2z"/><path d="M2 10v5h4M13 2h2v4"/><circle cx="9" cy="10" r="3"/><path d="M11 12l4 3" stroke-width="2"/>',
    props: '<path class="f" d="M3 0h10v16H3z"/><path class="bf" d="M5 2h6v5H5z"/><path d="M5 10h6M5 13h6" stroke="#555"/>',
    dcenter: '<path d="M1 1h5v14H1zM8 1h7v14H8z" fill="#ddd"/><path d="M3 4h2M3 7h2M3 10h2M10 4h3v2h-3zM10 9h3v2h-3z" stroke="#555"/>',
    palettes: '<path class="f" d="M2 1h12v4h-3v10H2z"/><path d="M5 3v10M8 3v10" stroke="#555" stroke-width="2" stroke-dasharray="2 2"/>',
    sheets: '<path class="f" d="M1 3h6l8 12H2z"/><path d="M9 2l6 9" stroke-width="2"/>',
    markup: '<path d="M1 1h8v7H1z" fill="#f0c773" stroke="none"/><path class="f" d="M6 8h9v8H6z"/><path d="M12 2v4"/><path d="M8 11h5M8 13h5" stroke="#555"/>',
    calc: '<path class="f" d="M3 0h10v16H3z"/><path d="M5 3h6" stroke="#555" stroke-width="2"/><path d="M5 7h7M5 10h7M5 13h7" stroke="#555" stroke-width="2" stroke-dasharray="2 1"/>',
    textstyle: '<path d="M1 13L5 1h1l4 12M3 9h6" stroke-width="2"/>' + pencil,
    dimstyle: '<path d="M1 5v9M15 5v9M2 11h12M4 9l-2 2 2 2M12 9l2 2-2 2"/><path class="o" d="M7 9l6-8 2 2-6 6z"/>',
    tablestyle: '<path d="M1 2h13v11H1zM1 5h13M1 9h13M5 5v8M10 5v8"/>' + pencil,
    leaderstyle: '<circle cx="12" cy="4" r="3"/><path d="M9 5Q4 5 2 13M1 9l1 5 4-2M9 6l-2 3"/><path class="o" d="M8 12l4-3 2 3-4 3z"/>',
    mesh1: '<path d="M1 2h13v12H1z" fill="#f0cf85" stroke="#b98f3e"/><path d="M1 6h13M1 10h13M5 2v12M10 2v12" stroke="#b98f3e"/><path d="M15 12v4h-4z" fill="#000" stroke="none"/>',
    mesh2: ball,
    mesh3: ball + '<path d="M12 8v8M8 12h8" stroke="#52d273" stroke-width="2"/>',
    mesh4: ball + '<path d="M8 12h8" stroke="#e05252" stroke-width="3"/>',
    mesh5: ball + '<path d="M2 14L14 2" stroke="#555" stroke-width="3"/><path d="M2 14L14 2" stroke="#ddd"/>',
    mesh6: '<path d="M1 5l4-4h10v8q-2 6-8 6-6-1-6-6z" fill="#f0d694" stroke="none"/><path class="b" d="M8 7l7-6"/><path d="M1 6h8v9" stroke="#fff3cf"/>',
    mesh7: '<circle cx="7" cy="9" r="6" fill="#f0d694" stroke="none"/><path d="M1 9h12M7 3v12" stroke="#b98f3e"/><path d="M10 1l5 5M15 1l-5 5" stroke="#e05252" stroke-width="2"/>',
    lattice: '<path d="M1 1h14v14H1z" stroke-dasharray="2 1" stroke-width="2"/><path class="f" d="M4 13V6l4-3 4 3v7z"/>',
    layers: stack + '<path d="M9 8h6v7H9z" fill="#ddd" stroke="#555"/><path class="b" d="M10 12h4"/>',
    bulb: '<circle cx="8" cy="6" r="4" fill="#ffe9a0" stroke="#a98a32"/><path d="M6 11h4v3H6z" fill="#888"/>',
    sun: '<circle cx="8" cy="8" r="4" fill="#ffe08a" stroke="#666"/><path d="M8 0v3M8 13v3M0 8h3M13 8h3M2 2l2 2M12 12l2 2M14 2l-2 2M2 14l2-2" stroke="#a98a32"/>',
    freeze: '<path d="M2 2h8v5M2 2v8h4" stroke="#999"/><circle cx="10" cy="11" r="3" stroke="#999" stroke-width="2"/>',
    lock: '<path d="M2 7h8v7H2z" fill="#f2c76e" stroke="#555"/><path d="M8 7V4q0-2 3-2 3 0 3 3"/>',
    swatch: '<path d="M3 3h10v10H3z" fill="#fff" stroke="#111"/>',
    laycur: stack + '<circle cx="8" cy="4" r="3" fill="#cfcfcf" stroke="none"/><path class="b" d="M1 12l9 0 5-4M1 15h9l5-4" stroke-width="2"/>',
    layprev: stack + '<path class="bf" d="M1 4l5-4v2h6v3H6v2z"/>',
    laystate: stack + '<path d="M7 7h8v8H7z" fill="#ddd" stroke="#555"/><path d="M9 10h5M9 12h5" stroke="#555"/>',
    line: '<path d="M3 13L13 3"/><path class="b" d="M12 3h2v2"/>',
    xline: '<path d="M1 15L15 1M6 10l3-3"/>',
    pline: '<path d="M2 12h7q4 0 4-4T9 4"/>',
    polygon: '<path d="M8 2l6 5-2 7H4L2 7z"/>',
    rect: '<path d="M2 4h11v8H2z"/><path class="bf" d="M12 11h3v3h-3z"/>',
    arc: '<path d="M2 13Q4 4 14 3"/><path class="b" d="M2 13h2"/>',
    circle: '<circle cx="8" cy="8" r="6"/>',
    cloud: '<path d="M4 4q4-3 6 0 5 1 3 5-1 5-6 3-6 0-3-8"/>',
    spline: '<path d="M2 12q3-12 6-4t6-4"/>',
    ellipse: '<ellipse cx="8" cy="8" rx="6" ry="4"/>',
    elarc: '<path d="M4 12q9 0 9-4T6 4"/>',
    insert: '<path d="M4 2h8v10H4z" fill="#ddd"/><path class="bf" d="M8 8h6v6H8z"/>',
    block: '<path d="M3 3h7v7H3z"/><circle class="o" cx="11" cy="10" r="3"/>',
    point: '<path class="f" d="M7 7h3v3H7z"/>',
    hatch: '<path d="M3 3h10v10H3zM3 8l5-5M3 13L13 3M8 13l5-5"/>',
    gradient: '<path class="bf" d="M3 3h10v10H3z"/>',
    region: '<path d="M3 12V5l6-2 4 4v5z" fill="#bbb"/>',
    table: '<path d="M2 3h12v10H2zM2 6h12M2 10h12M6 3v10M10 3v10"/>',
    mtext: '<path d="M4 14L8 2l5 12M6 10h6" stroke-width="2"/>',
    addsel: '<path d="M6 3h6v6H6z"/><circle class="bf" cx="11" cy="11" r="3"/>',
    erase: '<path d="M1 13h5l7-8-4-3z" fill="#ddd"/><path d="M3 11l3-4 3 2-3 4z" fill="#e05252" stroke="none"/>',
    copyobj: '<circle cx="4" cy="4" r="3"/><circle class="b" cx="9" cy="12" r="3"/>',
    mirror: '<path d="M7 2v11H1z"/><path class="b" d="M9 2v11h6z"/>',
    offset: '<circle class="b" cx="8" cy="8" r="7"/><circle cx="8" cy="8" r="4"/>',
    array: '<path d="M2 1h5v5H2z"/><path class="b" d="M2 9h5v5H2zM10 1h4v5h-4z"/>',
    move: '<path d="M0 8h15M8 1v14M3 5L0 8l3 3M5 3l3-3 3 3"/>',
    rotate: '<path d="M14 8a6 6 0 1 1-4-6"/>',
    scale: '<path d="M1 6h8v9H1zM1 10h12"/><path class="b" d="M1 3V1h13v10"/>',
    stretch: '<path d="M1 1h7v13H1zM4 4v7h6"/>',
    trim: '<path class="b" d="M1 3h10" stroke-dasharray="2 1"/><path d="M4 5l6 8M7 5v5"/>',
    extend: '<path d="M5 5h8" stroke-width="2"/><path d="M1 9h5v3"/>',
    breakpt: '<path d="M1 3h10v9H1z"/>',
    breakat: '<path d="M4 4H1v10h10"/><path class="b" d="M6 2v6"/>',
    join: '<path d="M0 8h5"/><path class="bf" d="M4 4l5 4-5 4z"/>',
    chamfer: '<path d="M1 15V9"/><path class="b" d="M1 9l7-8h7"/>',
    fillet: '<path d="M1 15V9"/><path class="b" d="M1 9q0-8 9-8"/>',
    blend: '<path class="b" d="M2 6q4-7 8 2"/><path d="M1 14l1-8"/>',
    explode: '<path class="b" d="M0 4h5v10H0zM4 4q4-6 8 0"/><path d="M4 6h8v7H4z" fill="#777"/>',
    front: '<path d="M1 2h9v3"/><path class="bf" d="M3 5h9v8H3z"/>',
    back: '<path d="M1 2h11" stroke-width="2"/><path class="bf" d="M3 7h8v6H3z"/>',
    above: '<path d="M1 5V3h10" stroke-width="3"/><path class="b" d="M6 5v8"/>',
    below: '<path class="f" d="M1 1h10v8H1z"/><path class="bf" d="M4 8h8v5H4z"/>',
    annofront: '<path d="M2 12L6 2l5 10"/><path class="bf" d="M6 9h6v4H6z"/>',
    hatchback: '<path d="M2 2h9v9H2zM2 7l5-5M5 11l6-6"/>',
    draworder: '<path class="f" d="M1 2h8v5H1z"/><path class="bf" d="M3 8h9v5H3z"/>',
    up: '<path d="M5 10l3-4 3 4" stroke-width="2"/>',
    down: '<path d="M5 6l3 4 3-4" stroke-width="2"/>',
    lt: '<path d="M10 5L6 8l4 3" stroke-width="2"/>',
    gt: '<path d="M6 5l4 3-4 3" stroke-width="2"/>',
    wrench: '<path d="M2 3l10 10" stroke-width="3"/>',
    grid: '<path d="M2 4h13M2 8h13M2 12h13M5 1v14M9 1v14M13 1v14"/>',
    snap: '<path d="M2 3h13M2 8h13M2 13h13" stroke-width="2" stroke-dasharray="2 3"/>',
    infer: '<path d="M8 1h7v6H8zM8 7v4"/><path class="f" d="M1 10h7v6H1z"/>',
    dynin: '<path d="M1 5h6M4 2v6"/><path class="f" d="M6 10h9v4H6z"/>',
    ortho: '<path d="M2 1v13h13M2 9h5v5"/>',
    polar: '<circle cx="7" cy="9" r="6"/><path d="M7 9h9M7 9l6-7"/>',
    iso: '<path d="M3 2l11 12" stroke="#d0745c"/><path d="M8 1v14" stroke="#6fcf7a"/>',
    otrack: '<path d="M1 14h14M3 13L13 3" stroke-width="2"/><circle class="f" cx="8" cy="8" r="2"/>',
    osnap: '<path d="M4 3h10v12H3V5"/><path d="M1 1h4v4H1z" stroke="#e9a94f"/>',
    lwt: '<path d="M1 3h10M1 7h14"/><path d="M1 11h14" stroke-width="3"/><path d="M1 15h14"/>',
    transp: '<path d="M1 1h14v14H1z"/><path d="M3 4h11M5 7h9M3 10h11M5 13h9" stroke-width="2" stroke-dasharray="2 2"/>',
    cycle: '<path d="M1 3h5M3 1v5"/><path d="M5 5h7v7H5z"/><path d="M7 7h8v8H7z" fill="#6fdc84" stroke="#9feab0"/>',
    osnap3d: '<path d="M4 5h8v8H4zM4 5l3-3h8l-3 3M15 2v8l-3 3"/><path d="M1 11h5v4H1z"/>',
    ducs: '<path d="M3 1v12h12M1 4l2-3 2 3M12 11l3 2-3 2"/><path d="M9 4l-2 4h3l-2 4"/>',
    filter: '<path d="M3 5h8v8H3zM3 5l3-3h8l-3 3M14 2v8l-3 3"/><path class="bf" d="M1 4h3v3H1zM9 11h3v3H9zM1 11h3v3H1z"/>',
    gizmo: '<path d="M8 2v7M8 9l-6 4M8 9l6 4M3 5l5-3 5 3v6l-5 3-5-3z"/><circle cx="8" cy="9" r="2"/>',
    annovis: persona + '<circle cx="13" cy="3" r="2"/>',
    annoauto: persona + '<path d="M13 0l-1 3h3l-2 4"/>',
    anno: persona,
    plus: '<path d="M8 1v14M1 8h14" stroke-width="2"/>',
    ruler: '<path class="f" d="M4 0h8v3H8v2h4v2H8v2h4v2H8v2h4v3H4z"/>',
    quickprop: '<path d="M3 1h11v14H3zM3 4h11"/><path d="M5 7h7M5 10h7M5 13h7" stroke-dasharray="2 1 9"/>',
    lockui: '<path d="M1 2h13v6M1 2v11h6"/><path class="f" d="M8 10h7v5H8z"/><path d="M10 10V7h3"/>',
    isolate: '<path d="M1 1h5v5H1zM8 9l3 6H5z"/><circle cx="13" cy="5" r="2"/>',
    hardware: '<circle cx="8" cy="8" r="7"/><circle class="f" cx="8" cy="8" r="5" opacity=".6"/><path d="M6 10l6-6"/>',
    trusted: '<path class="bf" d="M3 1h9v8H3z"/><path class="f" d="M6 3h6v8H6z"/><path class="o" d="M2 8h6v5H2z"/><path d="M9 12l2 2 4-4" stroke="#4fd04f" stroke-width="2"/>',
    clean: '<path d="M1 2h14v12H1zM4 11l3-3M9 7l3-3M4 9v2h2M10 4h2v2"/>',
    custom: '<path d="M1 4h14M1 8h14M1 12h14" stroke-width="2"/>',
    win: '<path class="f" d="M0 2l7-1v7H0zM8 1l8-1v8H8zM0 9h7v6l-7-1zM8 9h8v7l-8-1z"/>',
    search: '<circle cx="10" cy="6" r="5"/><path d="M7 10l-6 6"/>',
    cortana: '<circle cx="8" cy="8" r="6" stroke-width="2"/>',
    taskview: '<path d="M2 4h8v8H2zM2 1h8M2 15h8M13 1v3M13 7v8"/>',
    ie: '<circle cx="8" cy="9" r="5" stroke="#57b7ea" stroke-width="3"/><path d="M4 9h9" stroke="#57b7ea" stroke-width="2"/><path d="M1 15Q-1 10 6 4t9-3q1 1-1 4" stroke="#f2d14b"/>',
    folder: '<path d="M0 2h6l1 2h9v11H0z" fill="#f6d168" stroke="none"/><path d="M3 15v-5h10v5h-3v-3H6v3z" fill="#3f9be0" stroke="none"/>',
    outlook: '<path d="M6 3h10v10H6z" fill="#3c97db" stroke="none"/><path d="M0 2l9-2v16l-9-2z" fill="#0f64ae" stroke="none"/><circle cx="4" cy="8" r="2" stroke="#fff" stroke-width="2"/><path d="M12 8l5 9H7z" fill="#f4c98a" stroke="#7a5a2a"/><path d="M12 11v3" stroke="#222"/>',
    acad: '<path d="M0 0h16v16H0z" fill="#f2f2f2" stroke="none"/><path d="M2 14L7 2h2l5 12h-3l-2-4H6l-1 4z" fill="#b81f2c" stroke="none"/>',
    calcapp: '<path d="M2 0h12v16H2z" fill="#8a9099" stroke="none"/><path d="M3 2h10v2H3z" fill="#25d0f0" stroke="none"/><path d="M4 7h9M4 10h9M4 13h9" stroke="#e4e6ea" stroke-width="2" stroke-dasharray="2 1"/><path d="M10 9h3v6h-3z" fill="#1d4a8f" stroke="none"/>',
    excel: '<path d="M8 2h8v12H8z" fill="#fff" stroke="#1e7145"/><path d="M10 5h5M10 8h5M10 11h5" stroke="#1e7145"/><path d="M0 2l9-2v16l-9-2z" fill="#1e7145" stroke="none"/><path d="M3 5l4 6M7 5l-4 6" stroke="#fff" stroke-width="2"/>',
    pdf: '<path d="M1 0h14v16H1z" fill="#f3f3f3" stroke="#c22"/><path d="M7 3q1 5 6 8-5-2-10 2 5-4 4-10" stroke="#d02020"/>',
    word: '<path d="M8 2h8v12H8z" fill="#fff" stroke="#2a5699"/><path d="M10 5h5M10 8h5M10 11h5" stroke="#2a5699"/><path d="M0 2l9-2v16l-9-2z" fill="#2a5699" stroke="none"/><path d="M2 5l1 6 2-5 1 5 2-6" stroke="#fff"/>',
    revit: '<path d="M0 0h16v16H0z" fill="#dcebf7" stroke="none"/><path d="M5 14V3h4q3 0 3 3T9 9H6l6 5" stroke="#2a66a8" stroke-width="2"/>'
};

function svg(name) {
    return `<svg class="icon" viewBox="0 0 16 16">${icons[name] || ''}</svg>`;
}

// "name" = button, "name*" = switched on, "name+" = running, "|" = separator, "." = drop-down arrow
document.querySelectorAll('[data-icons]').forEach((box) => {
    box.innerHTML = box.dataset.icons.split(' ').map((item) => {
        if (box.tagName === 'SPAN' && !box.classList.contains('tools')) return svg(item);
        if (item === '|') return '<i class="sep"></i>';
        if (item === '.') return '<button class="drop" aria-label="More options"></button>';
        const name = item.replace(/[*+]/, '');
        const state = item.endsWith('*') ? 'on' : item.endsWith('+') ? 'run' : '';
        return `<button class="${state}" aria-label="${name}">${svg(name)}</button>`;
    }).join('');
});

document.querySelectorAll('[data-icon]').forEach((el) => {
    el.innerHTML = svg(el.dataset.icon);
});
```

FILE: drawing.js
```
const byId = (id) => document.getElementById(id);

// tables: left, divider, right, row lines, spans where the divider is drawn
const tables = [
    {
        x: [383, 423, 578],
        rows: [132, 144, 157, 172, 185, 198, 212, 225, 238, 252, 264, 282, 295, 308, 322, 334, 357, 375, 393, 411, 429, 447, 466, 484, 497, 515, 531, 549, 568, 586, 604, 623, 638, 656, 668, 680, 692, 704, 716, 728, 740, 752, 769, 781, 791, 807],
        split: [[144, 157], [172, 185], [198, 225], [238, 334], [357, 807]]
    },
    {
        x: [591, 631, 781],
        rows: [132, 144, 163, 182, 194, 239, 251, 263, 275, 287, 299, 311, 323, 335, 346, 358, 370, 382, 394, 406, 418, 430, 442, 455, 489, 501, 515, 527, 539, 551, 563, 575, 587, 599, 611, 623, 635, 647, 658, 671, 683, 694, 706],
        split: [[144, 706]]
    },
    {
        x: [786, 826, 976],
        rows: [132, 145, 158, 171, 184, 198, 211, 225, 238, 251, 264, 278, 291, 305, 318, 331, 345],
        split: [[145, 345]]
    }
];

byId('grid').innerHTML = tables.map(({ x, rows, split }) => {
    const top = rows[0];
    const bottom = rows[rows.length - 1];
    const across = rows.map((y) => `M${x[0]} ${y}H${x[2]}`).join('');
    const down = [[x[0], top, bottom], [x[2], top, bottom], ...split.map(([a, b]) => [x[1], a, b])]
        .map(([px, a, b]) => `M${px} ${a}V${b}`).join('');
    return `<path class="grid-side" d="${down}"/><path class="grid-line" d="${across}"/>`;
}).join('');

// bars: x, y, width, height
const bars = [
    // distribution boards and raceways
    [426,146,51,3],[426,150,52,4],[426,175,102,5],[426,202,94,5],[426,216,35,4],
    [426,240,121,4],[426,244,57,4],[426,253,111,5],[426,258,93,4],[427,267,28,5],[427,272,68,4],
    [426,285,67,4],[426,298,83,4],[426,312,69,4],[426,324,70,4],
    // power
    [426,359,122,4],[426,364,126,4],[426,369,46,4],[426,377,122,4],[426,382,126,4],[426,387,46,4],
    [426,395,123,4],[426,400,126,4],[426,405,46,3],[426,415,123,4],[426,420,116,4],
    [425,431,121,4],[425,435,102,4],[425,439,77,4],[425,448,122,4],[425,453,101,4],[425,458,77,3],
    [427,469,129,5],[425,475,17,3],[424,487,83,5],[424,503,112,4],[423,516,138,4],[423,520,98,5],
    [423,535,138,4],[423,539,108,5],[425,554,138,4],[425,559,131,4],[426,570,122,4],[426,574,93,4],[426,578,60,5],
    [426,588,113,4],[426,593,97,5],[426,599,61,4],
    // switches
    [427,680,75,5],[426,721,80,5],[426,753,78,4],[426,757,66,4],[426,763,48,3],[426,772,70,4],[426,784,27,4],
    // miscellaneous power systems
    [634,148,114,5],[634,153,82,4],[635,170,96,4],[635,186,35,4],[634,197,102,3],[635,202,20,4],
    [660,210,68,5],[660,219,34,4],[635,227,124,3],[635,231,87,4],[635,242,58,4],[635,254,85,4],
    [635,266,67,4],[635,278,119,4],[635,289,122,4],[635,301,122,4],[635,313,21,4],[635,325,36,4],
    [635,337,63,4],[635,349,18,4],[635,361,22,4],[635,373,42,4],[635,385,14,4],[635,397,47,4],
    [635,409,48,4],[635,421,44,4],[635,433,36,4],[634,444,96,4],[634,449,134,4],[634,456,60,3],
    [634,462,78,4],[634,468,23,4],[634,475,43,4],[634,482,62,4],[635,493,39,4],[635,503,81,3],[635,507,81,4],
    [635,519,49,4],[634,530,40,4],[634,542,44,4],[634,554,86,4],[634,565,36,4],[634,577,59,4],
    [635,590,45,4],[635,601,42,4],[635,613,49,4],[635,626,50,4],[635,638,48,4],[634,650,65,4],
    [635,659,98,4],[635,663,92,5],[634,674,79,4],[633,684,112,4],[633,688,71,4],[635,697,34,4],
    // earthing and lightning
    [830,148,43,4],[830,162,33,3],[828,174,87,4],[828,178,61,4],[828,188,66,4],[828,192,110,4],
    [828,200,87,5],[828,205,81,4],[828,214,85,3],[828,219,81,3],[828,227,85,4],[828,231,81,4],
    [828,240,85,4],[828,244,109,5],[828,253,85,5],[828,258,109,3],[828,267,66,5],[828,272,110,4],
    [830,281,59,4],[828,294,56,4],[828,307,98,4],[828,311,47,4],[828,320,72,4],[828,324,59,5],[828,334,30,5],
    // general notes
    [993,153,223,4],[997,157,245,5],[997,162,187,4],[992,172,279,3],[988,176,58,4],[992,185,271,5],[988,190,97,4],
    [992,200,246,5],[993,206,250,4],[990,210,44,4],[992,219,266,4],[997,224,27,4],[992,232,233,4],[990,237,139,4],
    [992,246,183,5],[999,252,151,3],[999,255,53,5],[992,265,222,5],[1003,271,211,3],[990,281,192,4],
    [990,290,261,4],[988,294,261,4],[988,300,264,3],[988,304,142,3],[990,313,276,4],[989,317,208,4],[999,323,160,3],
    [990,331,200,4],[987,335,241,5],[987,340,71,4],[987,345,51,4],[987,350,49,3],[987,354,90,4],[987,358,72,4],[990,363,57,4],
    [990,375,283,4],[998,380,281,4],[989,390,250,5],[997,396,177,3],[990,406,313,4],[989,415,233,4],
    [989,426,193,5],[989,431,184,4],[990,443,268,4],[990,448,257,4],[990,461,226,4],[1001,467,98,3],
    [990,478,268,4],[989,490,242,4],[993,496,61,4],[996,504,246,4],[996,509,226,4],[995,513,184,4],[995,519,263,4],
    [995,524,89,5],[996,529,200,4],[989,539,269,5],[999,544,244,4],[999,548,67,4],
    [990,558,225,5],[997,564,246,3],[989,574,292,5],[999,580,300,3],[999,584,174,5],[989,593,115,5],
    [989,602,254,4],[989,612,213,5],[999,618,173,3],
    // distribution panels numbering
    [994,636,25,4],[1046,645,77,4],[1046,668,33,3],[1046,675,61,4],[1046,682,56,4],[1046,687,40,4],[1046,693,41,4],
    [1046,699,34,4],[1059,705,8,4],[1046,711,34,4],[1046,718,47,3],[1046,723,52,4],[1046,735,24,3],[1046,739,52,4],
    [1046,745,79,4],[1046,753,39,4],[1046,759,41,4],[1046,765,68,4],[1046,771,82,4],[1046,777,109,4],[1046,783,76,4],
    [1046,789,46,4],[1046,797,74,4],[1047,804,57,4],[1047,811,72,4],[1046,824,31,5],[1046,832,68,4],
    // cable feeder numbering
    [1158,636,22,4],[1209,645,78,4],[1209,655,34,4],[1209,662,62,4],[1209,669,57,3],[1209,675,41,4],[1209,682,42,4],
    [1209,689,36,3],[1223,695,7,3],[1209,700,35,5],[1209,707,47,3],[1209,712,53,4],[1209,721,29,4],[1209,727,27,4],
    [1209,734,35,4],[1209,740,77,4]
];
const goldBars = [[425,606,132,4],[425,611,126,4],[425,617,126,3]];

const rect = (kind) => ([x, y, w, h]) => `<rect class="bar ${kind}" x="${x}" y="${y}" width="${w}" height="${h}"/>`;

// outlets with a cyan frame and two green tags
const outlets = [496, 508, 522, 532, 544, 557, 568, 580, 592, 604, 616, 629, 641, 652, 663];
const frames = outlets.concat(470).map((y) =>
    `<path class="cyan" d="M608 ${y - 4}h11v8h-11z"/><rect class="bar" x="611" y="${y - 2}" width="5" height="4"/>`).join('');

// earth bars carry a small green marker
const markers = [176, 189, 203, 216, 230, 243, 256, 269].map((y) =>
    `<circle class="green" cx="805" cy="${y - 1}" r="2"/><path class="green" d="M805 ${y}v3"/>`).join('');

byId('bars').innerHTML = bars.map(rect('')).join('') + goldBars.map(rect('gold')).join('') +
    frames + outlets.map((y) => rect('')([598, y - 2, 7, 4])).join('') + markers;

const headings = [
    [390, 126, 'LEGEND', 1], [391, 141, 'MAIN DISTRIBUTION BOARD'], [391, 168, 'MOTOR CONTROL CENTERS'],
    [391, 195, 'DISTRIBUTION, LIGHTING & POWER PANELBOARD'], [387, 234, 'RACEWAYS'], [391, 346, 'POWER'],
    [395, 635, 'FLOOR BOXES'], [392, 665, 'SWITCHES:'], [609, 141, 'MISCELLANEOUS POWER SYSTEMS'],
    [795, 141, 'EARTHING AND LIGHTNING SYSTEM:'], [1004, 145, 'GENERAL NOTES:', 1], [790, 361, 'ABBREVIATIONS', 1],
    [989, 635, 'DISTRIBUTION PANELS NUMBERING:', 1], [1153, 635, 'CABLE FEEDER NUMBERING', 1]
];
const notes = [
    [424, 644, 'FLOOR BOX CONTAINS, 1 DUPLEX 180V/13A NORMAL SOCKET,'], [424, 648, '1 DUPLEX 180V/13A UPS SOCKET,'],
    [424, 652, '2 DATA SOCKET RJ45,'],
    [426, 673, 'ONE - WAY , ONE GANG,10A-230V'], [426, 679, '(W.P) DITTO BUT WEATHER PROOF'], [426, 690, 'DIMMABLE TYPE'],
    [426, 697, 'ONE - WAY , TWO GANG,10A-230V'], [426, 702, '(W.P) DITTO BUT WEATHER PROOF'],
    [426, 709, 'ONE - WAY , THREE GANG,10A-230V'], [426, 714, '(W.P) DITTO BUT WEATHER PROOF'],
    [426, 720, 'TWO - WAY , ONE GANG,10A-230V'],
    [426, 733, 'TWO - WAY , TWO GANG,10A-230V'], [426, 738, '(W.P) DITTO BUT WEATHER PROOF'],
    [426, 744, 'TWO - WAY , THREE GANG,10A-230V'], [426, 749, '(W.P) DITTO BUT WEATHER PROOF'],
    [427, 800, 'MICRO SWITCH']
];

const text = (cls) => ([x, y, words, under]) =>
    `<text class="${cls}${under ? ' under' : ''}" x="${x}" y="${y}">${words.replace('&', '&amp;')}</text>`;
byId('captions').innerHTML = headings.map(text('heading')).join('') + notes.map(text('small')).join('');

const left = `ACB AIR CIRCUIT BREAKER;AF AMPERE FRAME;AFC ABOVE FINISHED CEILING;AFF ABOVE FINISHED FLOOR;ARCH ARCHITECT/ARCHITECTURAL;AT AMPERE TRIP;AUX AUXILIARY;BB BUSBAR;BLDG BUILDING;CAV CONSTANT AIR VOLUME;CB CIRCUIT BREAKER;CCTV CLOSED CIRCUIT TELEVISION;CLG CEILING;CONT CONTINUOUS;CU COPPER;DB DISTRIBUTION BOARD;DET DETAIL;DF DEMAND FACTOR;DIA DIAMETER;DIM DIMENSION;DMM DIGITAL MULTI METER;DWG DRAWING;E ESSENTIAL;EDB ESSENTIAL DISTRIBUTION BOARD;ELP ESSENTIAL LIGHTING PANEL;ELEV ELEVATOR;EMCC EMERGENCY MOTOR CONTROL CENTER;EPP EMERGENCY POWER PANEL;EXLP EXPLOSION PROOF;EX EXHAUST FAN;F FREQUENCY;FARP FIRE ALARM REPEATER PANEL;FACP FIRE ALARM CONTROL PANEL;FB FLOOR BOX;FCU FAN COIL UNIT;FIN FINISH;FFL FINISHED FLOOR LEVEL;FT FOOT/FEET;HD HAND DRYER;HT HEIGHT/HIGH;HRC HIGH RUPTURE CURRENT FUSE;HZ HERTZ;INT INTERIOR;IT INFORMATION TECHNOLOGY;KA KILO AMPERE;KV KILO VOLT;KVA KILO VOLT AMPERE;KW KILO WATT`;
const right = `L LIGHTING;LBS LOAD BREAK SWITCH;LCP LIGHTING CONTROL PANEL;LDC LIGHTING DOWN CONDUCTOR;LP LIGHTING PANEL;LS LANDSCAPE;LSZH LOW SMOKE ZERO HALOGEN;LV LOW VOLTAGE (400/230V);M METER;MAX MAXIMUM;MCB MINIATURE CIRCUIT BREAKER;MCCB MOULDED CASE CIRCUIT BREAKER;MCC MOTOR CONTROL CENTER;MCP MOTOR CONTROL PANEL;MDB MAIN DISTRIBUTION BOARD;MDF MAIN DISTRIBUTION FRAM;MECH MECHANICAL;MFSD MOTORIZED FIRE SMOKE DAMPERS;MH MANHOLE;MM MILLIMETER;MED MEDIUM;MLV MEDIUM VOLTAGE(22KV);MVA MEGA VOLT AMPERE;N.C NORMALLY CLOSE;NO. NUMBER;N.O NORMALLY OPEN;NTS NOT TO SCALE;PB PUSH BUTTON;PH PHASE;PP POWER PANEL BOARD;PVC POLYVINYL CHLORIDE;RCD RESIDUAL CURRENT DEVICE;REF REFERENCE;RMU RING MAIN UNIT;SC SHORT CIRCUIT;SPU SPLIT UNIT;ST SUBSTATION;S.S STAINLESS STEEL;SWG SWITCHGEAR;TR TRANSFORMER;TYP TYPICAL;UPS UNINTERRUPTIBLE POWER SUPPLY;WH WATER HEATER;WP WEATHER PROOF;V VOLT;VAV VARIABLE AIR VOLUME;VFD VARIABLE FREQUENCY DRIVE;XLPE CROSS LINKED POLYETHYLENE`;

function abbreviations(list, x) {
    const rows = list.split(';');
    return rows.map((row, i) => {
        const y = 367 + Math.round(i * 205 / (rows.length - 1));
        const gap = row.indexOf(' ');
        return `<text x="${x}" y="${y}">${row.slice(0, gap)}</text><text x="${x + 20}" y="${y}">${row.slice(gap + 1)}</text>`;
    }).join('');
}
byId('abbreviations').innerHTML = abbreviations(left, 790) + abbreviations(right, 895);
```
